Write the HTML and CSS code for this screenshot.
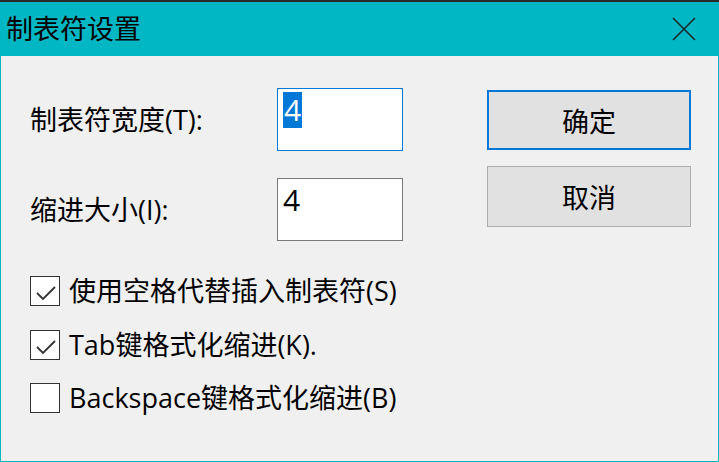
FILE: index.html
```html
<!DOCTYPE html>
<html lang="zh-CN">
<head>
    <meta charset="UTF-8">
    <meta name="viewport" content="width=device-width, initial-scale=1.0">
    <title>制表符设置</title>
    <link rel="stylesheet" href="styles.css">
</head>
<body>
    <div class="window">
        <header class="titlebar">
            <span class="title">制表符设置</span>
            <svg class="close" width="24" height="24" viewBox="0 0 24 24">
                <path d="M1 1 L23 23 M23 1 L1 23" />
            </svg>
        </header>

        <main class="content">
            <div class="top">
                <div class="fields">
                    <label class="field-label">制表符宽度(T):</label>
                    <div class="textbox focused"><span class="selected">4</span></div>

                    <label class="field-label">缩进大小(I):</label>
                    <div class="textbox">4</div>
                </div>

                <div class="buttons">
                    <button type="button" class="btn default">确定</button>
                    <button type="button" class="btn">取消</button>
                </div>
            </div>

            <div class="checks">
                <div class="check">
                    <span class="box">
                        <svg width="28" height="28" viewBox="0 0 28 28"><polyline points="6,16 12,22 24,10" /></svg>
                    </span>
                    <span>使用空格代替插入制表符(S)</span>
                </div>
                <div class="check">
                    <span class="box">
                        <svg width="28" height="28" viewBox="0 0 28 28"><polyline points="6,16 12,22 24,10" /></svg>
                    </span>
                    <span>Tab键格式化缩进(K).</span>
                </div>
                <div class="check">
                    <span class="box"></span>
                    <span>Backspace键格式化缩进(B)</span>
                </div>
            </div>
        </main>
    </div>
</body>
</html>
```

FILE: styles.css
```css
/* Global */
body {
    margin: 0;
    font-family: "Open Sans", "Noto Sans CJK SC", sans-serif;
    font-size: 27px;
    color: #000;
    background-color: #f0f0f0;
}

.window {
    width: 719px;
    height: 462px;
    box-sizing: border-box;
    border-top: 2px solid #2b2b2b;
    display: flex;
    flex-direction: column;
}

/* Title bar */
.titlebar {
    height: 54px;
    flex-shrink: 0;
    background-color: #00b7c3;
    display: flex;
    align-items: center;
    justify-content: space-between;
    padding: 0 23px 0 6px;
}

.title {
    line-height: 30px;
}

.close path {
    stroke: #1a2a2b;
    stroke-width: 1.6;
    fill: none;
}

/* Dialog body */
.content {
    flex: 1;
    background-color: #f0f0f0;
    border: 1px solid #00b7c3;
    border-top: none;
    padding: 32px 0 0 29px;
}

.top {
    display: flex;
    align-items: flex-start;
}

.fields {
    display: grid;
    grid-template-columns: 247px 126px;
    row-gap: 27px;
    align-items: center;
}

.field-label {
    line-height: 30px;
}

.textbox {
    height: 63px;
    box-sizing: border-box;
    background-color: #fff;
    border: 1px solid #7a7a7a;
    padding: 3px 0 0 5px;
    font-size: 30px;
    line-height: 36px;
}

.textbox.focused {
    border-color: #0078d7;
}

.selected {
    display: inline-block;
    background-color: #0078d7;
    color: #fff;
    padding: 0 1px;
}

/* Buttons */
.buttons {
    margin-left: 84px;
    padding-top: 2px;
    display: flex;
    flex-direction: column;
    gap: 16px;
}

.btn {
    width: 204px;
    height: 61px;
    font-family: inherit;
    font-size: 27px;
    color: #000;
    background-color: #e1e1e1;
    border: 1px solid #adadad;
    padding: 0;
}

.btn.default {
    height: 60px;
    border: 2px solid #0078d7;
}

/* Checkboxes */
.checks {
    margin-top: 35px;
    display: flex;
    flex-direction: column;
    gap: 23.5px;
}

.check {
    display: flex;
    align-items: center;
    gap: 9px;
    line-height: 30px;
}

.box {
    width: 30px;
    height: 30px;
    box-sizing: border-box;
    border: 1px solid #333;
    background-color: #fff;
    display: flex;
    align-items: center;
    justify-content: center;
}

.box polyline {
    fill: none;
    stroke: #333;
    stroke-width: 1.8;
}
```
